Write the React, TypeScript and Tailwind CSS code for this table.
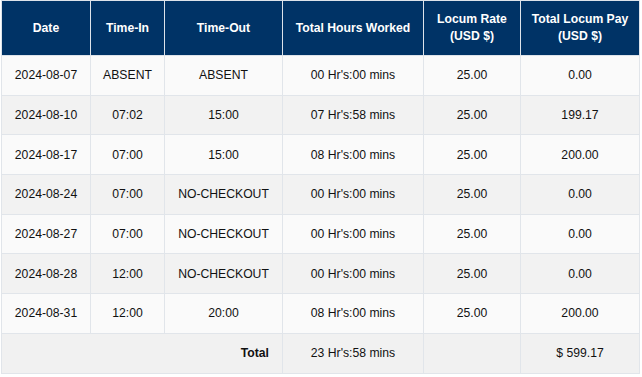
import React from 'react';

type Row = { date: string; tin: string; tout: string; hours: string; rate: string; pay: string };

const rows: Row[] = [
  { date: '2024-08-07', tin: 'ABSENT', tout: 'ABSENT', hours: "00 Hr's:00 mins", rate: '25.00', pay: '0.00' },
  { date: '2024-08-10', tin: '07:02', tout: '15:00', hours: "07 Hr's:58 mins", rate: '25.00', pay: '199.17' },
  { date: '2024-08-17', tin: '07:00', tout: '15:00', hours: "08 Hr's:00 mins", rate: '25.00', pay: '200.00' },
  { date: '2024-08-24', tin: '07:00', tout: 'NO-CHECKOUT', hours: "00 Hr's:00 mins", rate: '25.00', pay: '0.00' },
  { date: '2024-08-27', tin: '07:00', tout: 'NO-CHECKOUT', hours: "00 Hr's:00 mins", rate: '25.00', pay: '0.00' },
  { date: '2024-08-28', tin: '12:00', tout: 'NO-CHECKOUT', hours: "00 Hr's:00 mins", rate: '25.00', pay: '0.00' },
  { date: '2024-08-31', tin: '12:00', tout: '20:00', hours: "08 Hr's:00 mins", rate: '25.00', pay: '200.00' },
];

const th = 'border border-[#dde3ea] px-2 text-center font-bold text-white leading-[17px]';
const td = 'border border-[#e1e5ea] px-2 text-center text-[#111]';

export default function App() {
  return (
    <div className="w-[642px] h-[377px] bg-white pl-[1px] font-['Liberation_Sans',Arial,sans-serif] text-[12.2px]">
      <table className="w-[638px] border-collapse table-fixed">
        <colgroup>
          <col className="w-[89px]" />
          <col className="w-[74px]" />
          <col className="w-[118px]" />
          <col className="w-[141px]" />
          <col className="w-[97px]" />
          <col className="w-[119px]" />
        </colgroup>
        <thead>
          <tr className="h-[55px] bg-[#003366]">
            <th className={th}>Date</th>
            <th className={th}>Time-In</th>
            <th className={th}>Time-Out</th>
            <th className={th}>Total Hours Worked</th>
            <th className={th}>Locum Rate<br />(USD $)</th>
            <th className={th}>Total Locum Pay<br />(USD $)</th>
          </tr>
        </thead>
        <tbody>
          {rows.map((r, i) => (
            <tr key={r.date} className={i % 2 === 0 ? 'h-[39.7px] bg-[#fafafa]' : 'h-[39.7px] bg-[#f2f2f2]'}>
              <td className={td}>{r.date}</td>
              <td className={td}>{r.tin}</td>
              <td className={td}>{r.tout}</td>
              <td className={td}>{r.hours}</td>
              <td className={td}>{r.rate}</td>
              <td className={td}>{r.pay}</td>
            </tr>
          ))}
          <tr className="h-[39.7px] bg-[#f1f1f1]">
            <td colSpan={3} className="border border-[#e1e5ea] px-[13px] text-right font-bold text-[#111]">Total</td>
            <td className={td}>23 Hr's:58 mins</td>
            <td className={td}></td>
            <td className={td}>$ 599.17</td>
          </tr>
        </tbody>
      </table>
    </div>
  );
}
